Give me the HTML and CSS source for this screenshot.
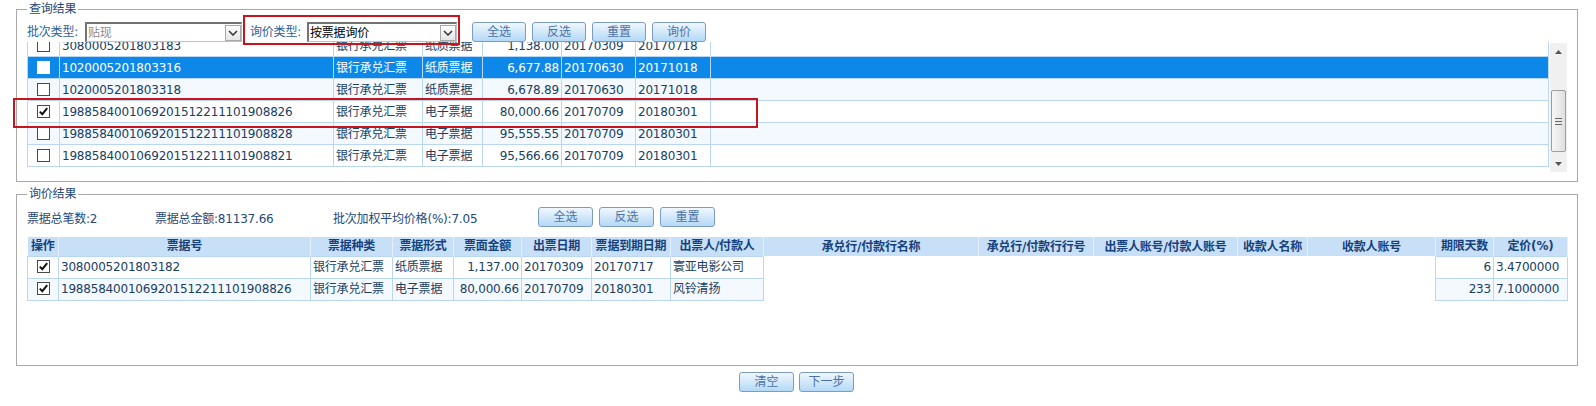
FILE: index.html
```html
<!DOCTYPE html>
<html lang="zh-CN">
<head>
    <meta charset="UTF-8">
    <title>询价</title>
    <link rel="stylesheet" href="styles.css">
</head>
<body>
<div id="page">
    <fieldset class="box" id="chaxun">
        <legend>查询结果</legend>
        <div class="tiaojian">
            <span class="lbl">批次类型:</span>
            <span class="sel sel1"><span class="sel-txt hui">贴现</span><span class="sel-btn"><svg width="10" height="6" viewBox="0 0 10 6"><polyline points="1,1 5,5 9,1" fill="none" stroke="#333" stroke-width="1.5"/></svg></span></span>
            <span class="lbl lbl2">询价类型:</span>
            <span class="sel sel2"><span class="sel-txt">按票据询价</span><span class="sel-btn"><svg width="10" height="6" viewBox="0 0 10 6"><polyline points="1,1 5,5 9,1" fill="none" stroke="#333" stroke-width="1.5"/></svg></span></span>
            <span class="btns btns1">
                <button class="anniu">全选</button>
                <button class="anniu">反选</button>
                <button class="anniu">重置</button>
                <button class="anniu">询价</button>
            </span>
        </div>
        <div class="gundong">
            <div class="biao-wrap">
                <table class="biao1">
                    <colgroup>
                        <col style="width:32px"><col style="width:274px"><col style="width:89px"><col style="width:60px">
                        <col style="width:79px"><col style="width:74px"><col style="width:75px"><col>
                    </colgroup>
                    <tr>
                        <td class="c"><span class="cb"></span></td>
                        <td>3080005201803183</td><td>银行承兑汇票</td><td>纸质票据</td>
                        <td class="r">1,138.00</td><td>20170309</td><td>20170718</td><td></td>
                    </tr>
                    <tr class="xuan">
                        <td class="c"><span class="cb"></span></td>
                        <td>1020005201803316</td><td>银行承兑汇票</td><td>纸质票据</td>
                        <td class="r">6,677.88</td><td>20170630</td><td>20171018</td><td></td>
                    </tr>
                    <tr class="qian">
                        <td class="c"><span class="cb"></span></td>
                        <td>1020005201803318</td><td>银行承兑汇票</td><td>纸质票据</td>
                        <td class="r">6,678.89</td><td>20170630</td><td>20171018</td><td></td>
                    </tr>
                    <tr>
                        <td class="c"><span class="cb"><svg width="11" height="11" viewBox="0 0 11 11"><path d="M1.8 5.6 L4.3 8.2 L9.2 2.2" fill="none" stroke="#111" stroke-width="2"/></svg></span></td>
                        <td>1988584001069201512211101908826</td><td>银行承兑汇票</td><td>电子票据</td>
                        <td class="r">80,000.66</td><td>20170709</td><td>20180301</td><td></td>
                    </tr>
                    <tr class="qian">
                        <td class="c"><span class="cb"></span></td>
                        <td>1988584001069201512211101908828</td><td>银行承兑汇票</td><td>电子票据</td>
                        <td class="r">95,555.55</td><td>20170709</td><td>20180301</td><td></td>
                    </tr>
                    <tr>
                        <td class="c"><span class="cb"></span></td>
                        <td>1988584001069201512211101908821</td><td>银行承兑汇票</td><td>电子票据</td>
                        <td class="r">95,566.66</td><td>20170709</td><td>20180301</td><td></td>
                    </tr>
                </table>
            </div>
            <div class="gdt">
                <div class="gdt-jt"><svg width="7" height="4" viewBox="0 0 7 4"><polygon points="0,4 3.5,0 7,4" fill="#555"/></svg></div>
                <div class="gdt-gd">
                    <div class="gdt-kuai"><svg width="7" height="7" viewBox="0 0 7 7"><path d="M0 0.5h7M0 3.5h7M0 6.5h7" stroke="#666" stroke-width="1"/></svg></div>
                </div>
                <div class="gdt-jt"><svg width="7" height="4" viewBox="0 0 7 4"><polygon points="0,0 3.5,4 7,0" fill="#555"/></svg></div>
            </div>
        </div>
    </fieldset>

    <fieldset class="box" id="xunjia">
        <legend>询价结果</legend>
        <div class="huizong">
            <span class="hz1">票据总笔数:2</span>
            <span class="hz2">票据总金额:81137.66</span>
            <span class="hz3">批次加权平均价格(%):7.05</span>
            <span class="btns">
                <button class="anniu da">全选</button>
                <button class="anniu da">反选</button>
                <button class="anniu da">重置</button>
            </span>
        </div>
        <div class="biao-wrap2">
            <table class="biao2">
                <colgroup>
                    <col style="width:31px"><col style="width:252px"><col style="width:82px"><col style="width:61px">
                    <col style="width:68px"><col style="width:70px"><col style="width:79px"><col style="width:93px">
                    <col style="width:215px"><col style="width:115px"><col style="width:144px"><col style="width:70px">
                    <col style="width:128px"><col style="width:58px"><col style="width:74px">
                </colgroup>
                <tr>
                    <th>操作</th><th>票据号</th><th>票据种类</th><th>票据形式</th><th>票面金额</th><th>出票日期</th>
                    <th>票据到期日期</th><th>出票人/付款人</th><th>承兑行/付款行名称</th><th>承兑行/付款行行号</th>
                    <th>出票人账号/付款人账号</th><th>收款人名称</th><th>收款人账号</th><th>期限天数</th><th>定价(%)</th>
                </tr>
                <tr>
                    <td class="c"><span class="cb"><svg width="11" height="11" viewBox="0 0 11 11"><path d="M1.8 5.6 L4.3 8.2 L9.2 2.2" fill="none" stroke="#111" stroke-width="2"/></svg></span></td>
                    <td>3080005201803182</td><td>银行承兑汇票</td><td>纸质票据</td><td class="r">1,137.00</td>
                    <td>20170309</td><td>20170717</td><td>寰亚电影公司</td>
                    <td class="kong"></td><td class="kong"></td><td class="kong"></td><td class="kong"></td><td class="kong"></td>
                    <td class="r">6</td><td>3.4700000</td>
                </tr>
                <tr class="qian">
                    <td class="c"><span class="cb"><svg width="11" height="11" viewBox="0 0 11 11"><path d="M1.8 5.6 L4.3 8.2 L9.2 2.2" fill="none" stroke="#111" stroke-width="2"/></svg></span></td>
                    <td>1988584001069201512211101908826</td><td>银行承兑汇票</td><td>电子票据</td><td class="r">80,000.66</td>
                    <td>20170709</td><td>20180301</td><td>风铃清扬</td>
                    <td class="kong"></td><td class="kong"></td><td class="kong"></td><td class="kong"></td><td class="kong"></td>
                    <td class="r">233</td><td>7.1000000</td>
                </tr>
            </table>
        </div>
    </fieldset>

    <div class="xiayibu">
        <button class="anniu da">清空</button>
        <button class="anniu da">下一步</button>
    </div>

    <div class="hongkuang hk1"></div>
    <div class="hongkuang hk2"></div>
</div>
</body>
</html>
```

FILE: styles.css
```css
*{margin:0;padding:0;box-sizing:border-box;}
body{font:12px "DejaVu Sans","Noto Sans CJK SC",sans-serif;color:#203e62;background:#fff;letter-spacing:-0.2px;}
#page{position:relative;padding-top:2px;width:1596px;}

.box{border:1px solid #a9a9a9;margin:0 18px 0 16px;padding:6px 10px 9px;min-width:0;}
.box legend{padding:0 2px;line-height:14px;color:#24497a;}
#xunjia{margin-top:5px;padding-bottom:0;}

/* 查询条件 */
.tiaojian{display:flex;align-items:center;height:20px;}
.lbl{width:58px;color:#2f5f98;line-height:20px;}
.lbl2{margin-left:8px;width:57px;}
.sel{display:flex;align-items:center;height:20px;border:1px solid #bcc2ca;border-top:2px solid #737373;border-left:2px solid #737373;background:#fff;}
.sel1{width:157px;}
.sel2{width:150px;}
.sel-txt{flex:1;padding-left:1px;color:#000;line-height:16px;}
.sel-txt.hui{color:#8c8c8c;}
.sel-btn{width:16px;height:16px;border:1px solid #a9a9a9;background:linear-gradient(#fdfdfd,#e6e6e6);display:flex;align-items:center;justify-content:center;}

.btns{display:flex;gap:6px;}
.btns1{margin-left:15px;}
.anniu{width:54px;height:20px;border:1px solid #7c9dc1;border-radius:3px;background:linear-gradient(#f0f7fd,#b3d9f7);color:#4d72a8;font:12px "DejaVu Sans","Noto Sans CJK SC",sans-serif;line-height:18px;text-align:center;}
.anniu.da{width:55px;}

/* 表格 */
.gundong{display:flex;height:130px;}
.biao-wrap{width:1523px;overflow:hidden;}
.biao1{width:1522px;table-layout:fixed;border-collapse:collapse;margin-top:-8px;}
.biao1 td{height:22px;border:1px solid #b9d6f2;padding:0 2px;white-space:nowrap;overflow:hidden;line-height:20px;}
.biao1 tr.xuan td{background:#0d88e8;color:#fff;}
.biao1 tr.xuan .cb{border-color:#fff;}
tr.qian td{background:#f3f9fe;}
td.c{text-align:center;}
td.r{text-align:right;}
.cb{display:inline-block;width:13px;height:13px;border:1px solid #4a4a4a;background:#fff;vertical-align:middle;position:relative;top:-1px;}
.cb svg{display:block;margin:0 auto;}

.gdt{width:17px;display:flex;flex-direction:column;background:#f0f0f0;margin-top:1px;}
.gdt-jt{height:17px;display:flex;align-items:center;justify-content:center;}
.gdt-gd{flex:1;padding-top:30px;}
.gdt-kuai{height:62px;margin:0 1px;border:1px solid #9d9d9d;border-radius:2px;background:linear-gradient(90deg,#f6f6f6,#e0e0e0);display:flex;align-items:center;justify-content:center;}

.huizong{display:flex;align-items:center;height:20px;color:#24497a;}
.hz1{width:128px;}
.hz2{width:178px;}
.hz3{width:205px;}

.biao-wrap2{margin-top:10px;height:128px;}
.biao2{width:1540px;table-layout:fixed;border-collapse:collapse;}
.biao2 th{height:19px;background:#c7e0f8;color:#17417b;font-weight:bold;border-right:1px solid #e3effb;white-space:nowrap;overflow:hidden;padding:0;line-height:18px;}
.biao2 td{height:22px;border:1px solid #b9d6f2;padding:0 2px;white-space:nowrap;overflow:hidden;line-height:20px;}
.biao2 td.kong{border:none;background:#fff;}

.xiayibu{display:flex;justify-content:center;gap:5px;margin-top:6px;padding-right:3px;}

/* 标注框 */
.hongkuang{position:absolute;border:2px solid #c8141c;}
.hk1{left:243px;top:15px;width:217px;height:30px;}
.hk2{left:13px;top:98px;width:745px;height:30px;}
```
